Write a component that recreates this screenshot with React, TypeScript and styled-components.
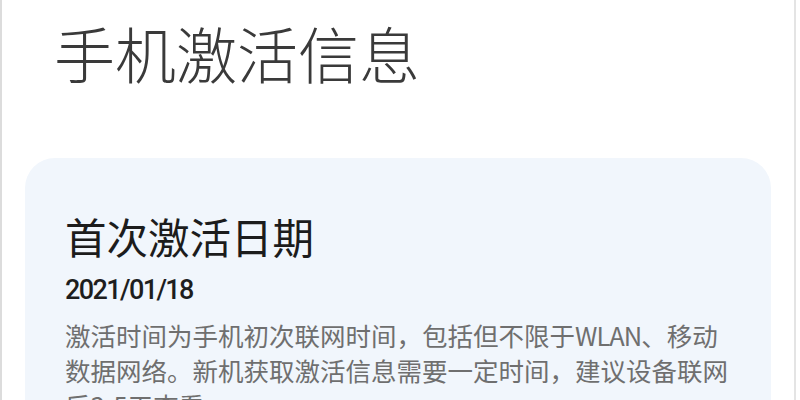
import React from "react";
import styled, { createGlobalStyle } from "styled-components";

const GlobalStyle = createGlobalStyle`
  html, body {
    margin: 0;
    padding: 0;
    background: #ffffff;
  }
  body {
    font-family: "Noto Sans CJK SC", "Noto Sans", sans-serif;
  }
`;

const Screen = styled.div`
  width: 796px;
  height: 400px;
  overflow: hidden;
  box-sizing: border-box;
  border-left: 2px solid #dcdcdc;
  border-right: 2px solid #e4e4e4;
  background: #ffffff;
  display: flex;
  flex-direction: column;
`;

const PageTitle = styled.h1`
  margin: 20px 0 0 52px;
  font-size: 61px;
  line-height: 66px;
  font-weight: 300;
  color: #3a3a3a;
`;

const Card = styled.section`
  margin: 72px 23px 0 23px;
  padding: 53px 40px 0 40px;
  background: #f1f6fc;
  border-radius: 30px 30px 0 0;
  flex: 1;
`;

const CardTitle = styled.h2`
  margin: 0;
  font-size: 41.5px;
  line-height: 50px;
  font-weight: 400;
  color: #1c1c1c;
`;

const DateText = styled.div`
  margin-top: 13px;
  font-family: Roboto, "Noto Sans", sans-serif;
  font-size: 27px;
  line-height: 32px;
  font-weight: 500;
  letter-spacing: -1.6px;
  color: #1e1e1e;
`;

const Description = styled.p`
  margin: 11px 0 0 0;
  font-size: 25.5px;
  line-height: 35px;
  font-weight: 400;
  color: #6f6f6f;
`;

const Line = styled.span`
  display: block;
  white-space: nowrap;
`;

const Latin = styled.span`
  letter-spacing: -1px;
`;

const App: React.FC = () => {
  return (
    <>
      <GlobalStyle />
      <Screen>
        <PageTitle>手机激活信息</PageTitle>
        <Card>
          <CardTitle>首次激活日期</CardTitle>
          <DateText>2021/01/18</DateText>
          <Description>
            <Line>
              激活时间为手机初次联网时间，包括但不限于<Latin>WLAN</Latin>、移动
            </Line>
            <Line>数据网络。新机获取激活信息需要一定时间，建议设备联网</Line>
            <Line>后3-5天查看</Line>
          </Description>
        </Card>
      </Screen>
    </>
  );
};

export default App;
